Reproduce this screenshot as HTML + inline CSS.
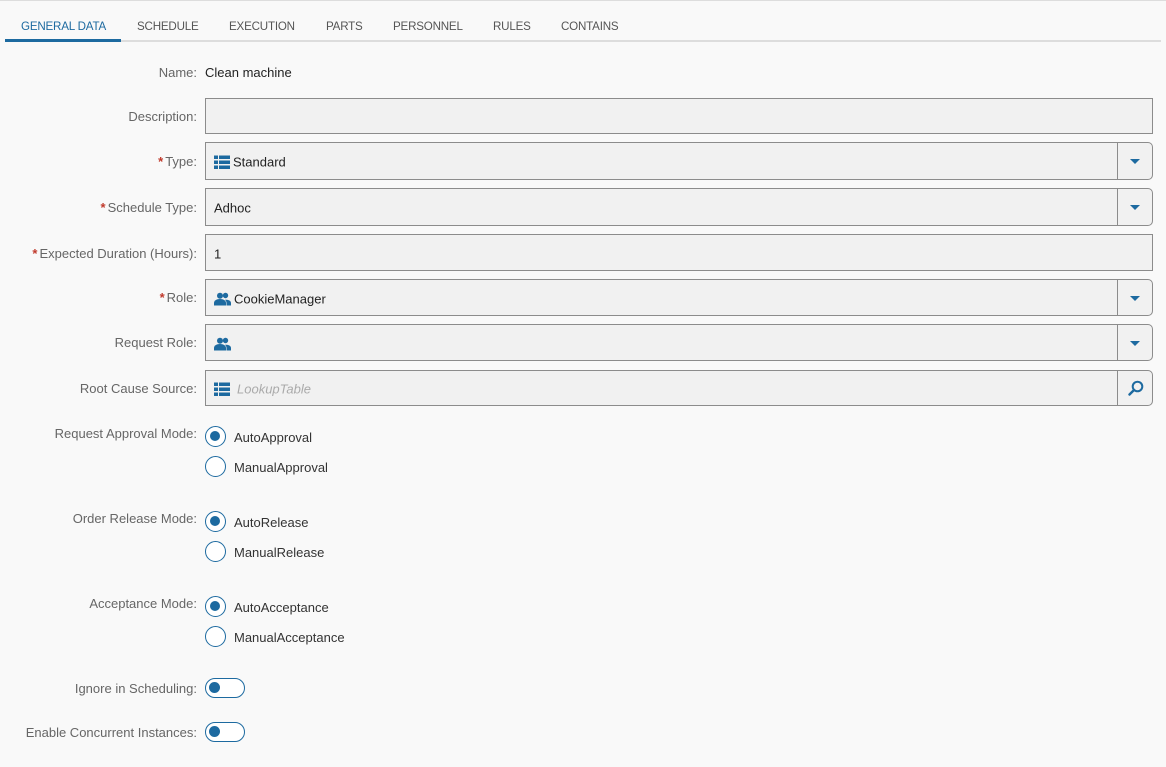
<!DOCTYPE html>
<html><head><style>
*{box-sizing:border-box;margin:0;padding:0}
body{width:1166px;height:767px;background:#f9f9f9;font-family:"Liberation Sans",sans-serif;font-size:13px;color:#333;position:relative;overflow:hidden}
.topline{position:absolute;left:0;top:0;width:1166px;height:1px;background:#ddd}
.tabline{position:absolute;left:5px;top:40px;width:1156px;height:2px;background:#ddd}
.tab{position:absolute;top:20px;color:#555;font-size:11.6px;letter-spacing:-0.2px}
.act{position:absolute;left:5px;top:39px;width:116px;height:3px;background:#1d6aa0}
.lbl{position:absolute;right:969px;color:#666;white-space:nowrap}
.req{color:#c0392b;font-weight:bold;margin-right:2px}
.box{position:absolute;left:205px;width:948px;background:#f1f1f1;border:1px solid #8c8c8c}
.dd{border-radius:0 5px 5px 0}
.btn{position:absolute;right:0;top:0;bottom:0;width:35px;border-left:1px solid #8c8c8c}
.tri{position:absolute;left:12px;top:50%;margin-top:-2px;width:0;height:0;border-left:5px solid transparent;border-right:5px solid transparent;border-top:5px solid #1d6aa0}
.val{position:absolute;left:8px;top:50%;transform:translateY(-50%);margin-top:1px;color:#222;white-space:nowrap;display:flex;align-items:center}
.radio{position:absolute;left:205px;width:21px;height:21px;border:1.5px solid #1d6aa0;border-radius:50%;background:#fff}
.radio.on:after{content:"";position:absolute;left:4px;top:4px;width:10px;height:10px;border-radius:50%;background:#1d6aa0}
.rl{position:absolute;left:234px;color:#333}
.tog{position:absolute;left:205px;width:40px;height:20px;border:1.5px solid #1d6aa0;border-radius:10px;background:#fff}
.tog:after{content:"";position:absolute;left:3px;top:3px;width:11px;height:11px;border-radius:50%;background:#1d6aa0}
</style></head><body>
<div class="topline"></div>
<div class="tabline"></div><div class="act"></div>
<div class="tab" style="left:21px;color:#1d6aa0">GENERAL DATA</div>
<div class="tab" style="left:137px">SCHEDULE</div>
<div class="tab" style="left:229px">EXECUTION</div>
<div class="tab" style="left:326px">PARTS</div>
<div class="tab" style="left:393px">PERSONNEL</div>
<div class="tab" style="left:493px">RULES</div>
<div class="tab" style="left:561px">CONTAINS</div>

<div class="lbl" style="top:65px">Name:</div>
<div style="position:absolute;left:205px;top:65px;color:#222">Clean machine</div>

<div class="lbl" style="top:109px">Description:</div>
<div class="box" style="top:98px;height:36px"></div>

<div class="lbl" style="top:154px"><span class="req">*</span>Type:</div>
<div class="box dd" style="top:142px;height:38px"><div class="val"><svg width="16" height="14" viewBox="0 0 16 14" style="margin-right:3px"><g fill="#1d6aa0"><rect x="0" y="0" width="4" height="3.5"/><rect x="5" y="0" width="11" height="3.5"/><rect x="0" y="5" width="4" height="3.5"/><rect x="5" y="5" width="11" height="3.5"/><rect x="0" y="10" width="4" height="3.5"/><rect x="5" y="10" width="11" height="3.5"/></g></svg>Standard</div><div class="btn"><div class="tri"></div></div></div>

<div class="lbl" style="top:200px"><span class="req">*</span>Schedule Type:</div>
<div class="box dd" style="top:188px;height:38px"><div class="val">Adhoc</div><div class="btn"><div class="tri"></div></div></div>

<div class="lbl" style="top:246px"><span class="req">*</span>Expected Duration (Hours):</div>
<div class="box" style="top:234px;height:37px"><div class="val">1</div></div>

<div class="lbl" style="top:290px"><span class="req">*</span>Role:</div>
<div class="box dd" style="top:279px;height:37px"><div class="val"><svg width="17" height="13" viewBox="0 0 17 13" style="margin-right:3px"><g fill="#1d6aa0"><circle cx="6" cy="3.3" r="3"/><circle cx="11.5" cy="3" r="2.7"/><path d="M0 13v-2.5c0-2.5 2.5-4 6-4s6 1.5 6 4V13z"/><path d="M12.5 13v-2.5c0-1.2-.5-2.3-1.5-3.2 3.5-.3 6 1 6 3.2V13z"/></g></svg>CookieManager</div><div class="btn"><div class="tri"></div></div></div>

<div class="lbl" style="top:335px">Request Role:</div>
<div class="box dd" style="top:324px;height:37px"><div class="val"><svg width="17" height="13" viewBox="0 0 17 13"><g fill="#1d6aa0"><circle cx="6" cy="3.3" r="3"/><circle cx="11.5" cy="3" r="2.7"/><path d="M0 13v-2.5c0-2.5 2.5-4 6-4s6 1.5 6 4V13z"/><path d="M12.5 13v-2.5c0-1.2-.5-2.3-1.5-3.2 3.5-.3 6 1 6 3.2V13z"/></g></svg></div><div class="btn"><div class="tri"></div></div></div>

<div class="lbl" style="top:381px">Root Cause Source:</div>
<div class="box dd" style="top:370px;height:36px"><div class="val"><svg width="16" height="14" viewBox="0 0 16 14" style="margin-right:7px"><g fill="#1d6aa0"><rect x="0" y="0" width="4" height="3.5"/><rect x="5" y="0" width="11" height="3.5"/><rect x="0" y="5" width="4" height="3.5"/><rect x="5" y="5" width="11" height="3.5"/><rect x="0" y="10" width="4" height="3.5"/><rect x="5" y="10" width="11" height="3.5"/></g></svg><i style="color:#aaa">LookupTable</i></div><div class="btn"><svg width="16" height="16" viewBox="0 0 16 16" style="position:absolute;left:10px;top:9px"><circle cx="9.5" cy="6.5" r="4.8" fill="none" stroke="#1d6aa0" stroke-width="2"/><path d="M6 10l-4.5 4.5" stroke="#1d6aa0" stroke-width="2.4" stroke-linecap="round"/></svg></div></div>

<div class="lbl" style="top:426px">Request Approval Mode:</div>
<div class="radio on" style="top:426px"></div><div class="rl" style="top:430px">AutoApproval</div>
<div class="radio" style="top:456px"></div><div class="rl" style="top:460px">ManualApproval</div>

<div class="lbl" style="top:511px">Order Release Mode:</div>
<div class="radio on" style="top:511px"></div><div class="rl" style="top:515px">AutoRelease</div>
<div class="radio" style="top:541px"></div><div class="rl" style="top:545px">ManualRelease</div>

<div class="lbl" style="top:596px">Acceptance Mode:</div>
<div class="radio on" style="top:596px"></div><div class="rl" style="top:600px">AutoAcceptance</div>
<div class="radio" style="top:626px"></div><div class="rl" style="top:630px">ManualAcceptance</div>

<div class="lbl" style="top:681px">Ignore in Scheduling:</div>
<div class="tog" style="top:678px"></div>
<div class="lbl" style="top:725px">Enable Concurrent Instances:</div>
<div class="tog" style="top:722px"></div>
</body></html>
